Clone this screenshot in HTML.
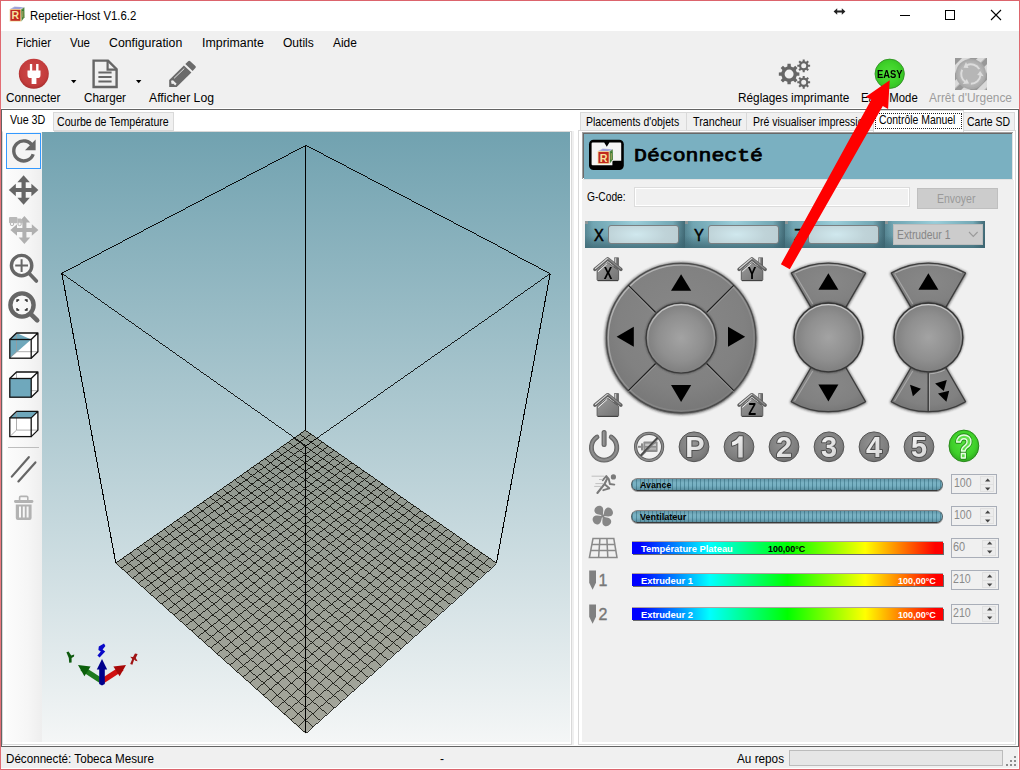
<!DOCTYPE html>
<html><head><meta charset="utf-8"><title>Repetier-Host V1.6.2</title>
<style>
html,body{margin:0;padding:0;background:#f0f0f0;overflow:hidden;}
#w{position:relative;width:1020px;height:770px;overflow:hidden;background:#f0f0f0;font-family:"Liberation Sans",sans-serif;}
#w div,#w svg,#w span{position:absolute;}
.t{overflow:visible;}
</style></head><body><div id="w">
<div style="left:0px;top:0px;width:1020px;height:31px;background:#fff;"></div>
<div style="left:1px;top:108px;width:1018px;height:1px;background:#fff;"></div>
<div style="left:1px;top:109px;width:1018px;height:638px;background:#fff;box-sizing:border-box;border:1px solid #646464;"></div>
<div style="left:1px;top:768px;width:1018px;height:1px;background:#fff;"></div>
<div style="left:1018px;top:747px;width:1px;height:22px;background:#fff;"></div>
<div style="left:0px;top:0px;width:1020px;height:1px;background:#dc646c;"></div>
<div style="left:0px;top:769px;width:1020px;height:1px;background:#dc646c;"></div>
<div style="left:0px;top:0px;width:1px;height:770px;background:linear-gradient(#dc646c 0,#e56f76 100px,#ee7a80 300px,#ee7a80 600px,#e06a72 770px);"></div>
<div style="left:1019px;top:0px;width:1px;height:770px;background:linear-gradient(#dc646c 0,#e56f76 100px,#ee7a80 300px,#ee7a80 600px,#e06a72 770px);"></div>
<svg style="left:9px;top:6px" width="16" height="16" viewBox="0 0 16 16"><polygon points="1,3 5.5,0.6 15.4,1.2 12,3.4" fill="#b9bce0"/><polygon points="3,2.4 6,1.2 13,1.6 10.5,2.8" fill="#8f94d6"/><polygon points="12,3.4 15.4,1.2 15.6,11.2 12.4,15.4" fill="#5a8a4a"/><polygon points="12.9,4.6 14.8,3.2 14.9,10.6 13.1,13.4" fill="#2f7a2a"/><rect x="13.4" y="5" width="0.9" height="6.4" fill="#c9b070"/><rect x="0.6" y="3" width="11.6" height="12.6" fill="#f3dfa2"/><rect x="1.4" y="3.8" width="10" height="11" fill="#c0281f"/><text x="6.4" y="13.3" font-family="Liberation Sans, sans-serif" font-weight="700" font-size="10.5" text-anchor="middle" fill="#f7e3a0">R</text></svg>
<svg class="t" style="left:30.40px;top:20.00px" width="1" height="1" overflow="visible"><text x="0" y="0" font-family="'Liberation Sans', sans-serif" font-size="12" font-weight="400" fill="#000" textLength="106.30" lengthAdjust="spacingAndGlyphs" >Repetier-Host V1.6.2</text></svg>
<svg style="left:833px;top:6.5px" width="13" height="9" viewBox="0 0 13 9"><path d="M0.6 4.5 L4.2 1.2 V3.6 H8.8 V1.2 L12.4 4.5 L8.8 7.8 V5.4 H4.2 V7.8 Z" fill="#222"/></svg>
<div style="left:900px;top:15px;width:10px;height:1px;background:#000;"></div>
<div style="left:945px;top:10px;width:10px;height:10px;background:transparent;box-sizing:border-box;border:1px solid #000;"></div>
<svg style="left:990px;top:9px" width="12" height="12" viewBox="0 0 12 12"><path d="M1 1 L11 11 M11 1 L1 11" stroke="#000" stroke-width="1.1" fill="none"/></svg>
<svg class="t" style="left:16.30px;top:47.00px" width="1" height="1" overflow="visible"><text x="0" y="0" font-family="'Liberation Sans', sans-serif" font-size="12" font-weight="400" fill="#000" textLength="35.10" lengthAdjust="spacingAndGlyphs" >Fichier</text></svg>
<svg class="t" style="left:70.20px;top:47.00px" width="1" height="1" overflow="visible"><text x="0" y="0" font-family="'Liberation Sans', sans-serif" font-size="12" font-weight="400" fill="#000" textLength="20.00" lengthAdjust="spacingAndGlyphs" >Vue</text></svg>
<svg class="t" style="left:109.40px;top:47.00px" width="1" height="1" overflow="visible"><text x="0" y="0" font-family="'Liberation Sans', sans-serif" font-size="12" font-weight="400" fill="#000" textLength="73.30" lengthAdjust="spacingAndGlyphs" >Configuration</text></svg>
<svg class="t" style="left:202.20px;top:47.00px" width="1" height="1" overflow="visible"><text x="0" y="0" font-family="'Liberation Sans', sans-serif" font-size="12" font-weight="400" fill="#000" textLength="61.90" lengthAdjust="spacingAndGlyphs" >Imprimante</text></svg>
<svg class="t" style="left:283.10px;top:47.00px" width="1" height="1" overflow="visible"><text x="0" y="0" font-family="'Liberation Sans', sans-serif" font-size="12" font-weight="400" fill="#000" textLength="30.80" lengthAdjust="spacingAndGlyphs" >Outils</text></svg>
<svg class="t" style="left:333.10px;top:47.00px" width="1" height="1" overflow="visible"><text x="0" y="0" font-family="'Liberation Sans', sans-serif" font-size="12" font-weight="400" fill="#000" textLength="23.90" lengthAdjust="spacingAndGlyphs" >Aide</text></svg>
<svg class="t" style="left:6.20px;top:102.00px" width="1" height="1" overflow="visible"><text x="0" y="0" font-family="'Liberation Sans', sans-serif" font-size="12" font-weight="400" fill="#000" textLength="54.40" lengthAdjust="spacingAndGlyphs" >Connecter</text></svg>
<svg class="t" style="left:84.00px;top:102.00px" width="1" height="1" overflow="visible"><text x="0" y="0" font-family="'Liberation Sans', sans-serif" font-size="12" font-weight="400" fill="#000" textLength="42.00" lengthAdjust="spacingAndGlyphs" >Charger</text></svg>
<svg class="t" style="left:149.00px;top:102.00px" width="1" height="1" overflow="visible"><text x="0" y="0" font-family="'Liberation Sans', sans-serif" font-size="12" font-weight="400" fill="#000" textLength="65.00" lengthAdjust="spacingAndGlyphs" >Afficher Log</text></svg>
<svg class="t" style="left:738.00px;top:102.00px" width="1" height="1" overflow="visible"><text x="0" y="0" font-family="'Liberation Sans', sans-serif" font-size="12" font-weight="400" fill="#000" textLength="111.40" lengthAdjust="spacingAndGlyphs" >Réglages imprimante</text></svg>
<svg class="t" style="left:861.30px;top:102.00px" width="1" height="1" overflow="visible"><text x="0" y="0" font-family="'Liberation Sans', sans-serif" font-size="12" font-weight="400" fill="#000" textLength="56.70" lengthAdjust="spacingAndGlyphs" >Easy Mode</text></svg>
<svg class="t" style="left:929.00px;top:102.00px" width="1" height="1" overflow="visible"><text x="0" y="0" font-family="'Liberation Sans', sans-serif" font-size="12" font-weight="400" fill="#9d9d9d" textLength="83.00" lengthAdjust="spacingAndGlyphs" >Arrêt d'Urgence</text></svg>
<svg style="left:18px;top:58px" width="32" height="32" viewBox="0 0 32 32"><defs><radialGradient id="gR" cx="50%" cy="45%" r="55%"><stop offset="0" stop-color="#cf4a4a"/><stop offset="0.8" stop-color="#c33c3c"/><stop offset="1" stop-color="#a82e2e"/></radialGradient></defs><circle cx="15.8" cy="15.8" r="15" fill="url(#gR)"/><path d="M11.9 6 h2.3 v6.5 h3.9 v-6.5 h2.4 v6.5 h2 v4.4 q0 3.2 -3.2 3.2 h-0.9 v5.9 h-4.8 v-5.9 h-0.9 q-3.2 0 -3.2 -3.2 v-4.4 h2.4z" fill="#fff"/></svg>
<svg style="left:71px;top:80px" width="6" height="4" viewBox="0 0 6 4"><path d="M0 0 H5.4 L2.7 3.2Z" fill="#000"/></svg>
<svg style="left:136px;top:80px" width="6" height="4" viewBox="0 0 6 4"><path d="M0 0 H5.4 L2.7 3.2Z" fill="#000"/></svg>
<svg style="left:92px;top:59px" width="27" height="30" viewBox="0 0 27 30"><path d="M1.6 1.6 H16 L24.6 10.2 V28 H1.6 Z" fill="none" stroke="#666" stroke-width="2.4" stroke-linejoin="miter"/><path d="M15.6 1.6 V10.6 H24.6" fill="none" stroke="#666" stroke-width="2.2"/><path d="M6.4 13.6 H19.6 M6.4 18 H19.6 M6.4 22.4 H19.6" stroke="#666" stroke-width="2"/></svg>
<svg style="left:165px;top:58px" width="34" height="32" viewBox="165 58 34 32"><path d="M169.2 80 L183.9 65.4 L191.4 72.4 L176.7 86.9 H169.2 Z" fill="#6b6b6b"/><path d="M185.3 64 L188.2 61.2 Q189.2 60.3 190.2 61.2 L195.4 66 Q196.4 67 195.4 68 L192.6 70.9 Z" fill="#6b6b6b"/><path d="M174.1 78.3 L184.3 68.5" stroke="#f0f0f0" stroke-width="0.9"/><path d="M171 80.8 L173 80.2 L176.6 83.8 L175.2 85.6 L173.4 83.7 L171.6 83.9 Z" fill="#f0f0f0"/></svg>
<svg style="left:776px;top:58px" width="38" height="34" viewBox="776 58 38 34"><path d="M796.80,72.33 L799.37,72.47 L799.37,75.73 L796.80,75.87 L795.80,78.29 L797.51,80.21 L795.21,82.51 L793.29,80.80 L790.87,81.80 L790.73,84.37 L787.47,84.37 L787.33,81.80 L784.91,80.80 L782.99,82.51 L780.69,80.21 L782.40,78.29 L781.40,75.87 L778.83,75.73 L778.83,72.47 L781.40,72.33 L782.40,69.91 L780.69,67.99 L782.99,65.69 L784.91,67.40 L787.33,66.40 L787.47,63.83 L790.73,63.83 L790.87,66.40 L793.29,67.40 L795.21,65.69 L797.51,67.99 L795.80,69.91Z M784.60 74.10 a4.50 4.50 0 1 0 9.00 0 a4.50 4.50 0 1 0 -9.00 0Z" fill="#666" fill-rule="evenodd"/><path d="M808.28,64.75 L810.12,64.78 L810.12,66.82 L808.28,66.85 L807.68,68.29 L808.96,69.62 L807.52,71.06 L806.19,69.78 L804.75,70.38 L804.72,72.22 L802.68,72.22 L802.65,70.38 L801.21,69.78 L799.88,71.06 L798.44,69.62 L799.72,68.29 L799.12,66.85 L797.28,66.82 L797.28,64.78 L799.12,64.75 L799.72,63.31 L798.44,61.98 L799.88,60.54 L801.21,61.82 L802.65,61.22 L802.68,59.38 L804.72,59.38 L804.75,61.22 L806.19,61.82 L807.52,60.54 L808.96,61.98 L807.68,63.31Z M801.20 65.80 a2.50 2.50 0 1 0 5.00 0 a2.50 2.50 0 1 0 -5.00 0Z" fill="#666" fill-rule="evenodd"/><path d="M808.28,81.25 L810.12,81.28 L810.12,83.32 L808.28,83.35 L807.68,84.79 L808.96,86.12 L807.52,87.56 L806.19,86.28 L804.75,86.88 L804.72,88.72 L802.68,88.72 L802.65,86.88 L801.21,86.28 L799.88,87.56 L798.44,86.12 L799.72,84.79 L799.12,83.35 L797.28,83.32 L797.28,81.28 L799.12,81.25 L799.72,79.81 L798.44,78.48 L799.88,77.04 L801.21,78.32 L802.65,77.72 L802.68,75.88 L804.72,75.88 L804.75,77.72 L806.19,78.32 L807.52,77.04 L808.96,78.48 L807.68,79.81Z M801.20 82.30 a2.50 2.50 0 1 0 5.00 0 a2.50 2.50 0 1 0 -5.00 0Z" fill="#666" fill-rule="evenodd"/></svg>
<svg style="left:873px;top:57px" width="34" height="34" viewBox="873 57 34 34"><defs><radialGradient id="gG" cx="48%" cy="48%" r="58%"><stop offset="0" stop-color="#52de3c"/><stop offset="0.55" stop-color="#40d32a"/><stop offset="0.9" stop-color="#36c224"/><stop offset="1" stop-color="#2c9c1e"/></radialGradient></defs><circle cx="889.7" cy="73.8" r="14.7" fill="url(#gG)" stroke="#2f8a22" stroke-width="0.8"/></svg>
<svg class="t" style="left:877.00px;top:77.90px" width="1" height="1" overflow="visible"><text x="0" y="0" font-family="'Liberation Sans', sans-serif" font-size="10" font-weight="700" fill="#000" textLength="25.50" lengthAdjust="spacingAndGlyphs" opacity=".999">EASY</text></svg>
<svg style="left:955px;top:58px" width="32" height="32" viewBox="0 0 32 32"><defs><pattern id="hz" width="11" height="11" patternUnits="userSpaceOnUse" patternTransform="rotate(45)"><rect width="11" height="11" fill="#989898"/><rect x="5" width="5.6" height="11" fill="#dadada"/></pattern></defs><rect width="32" height="32" fill="url(#hz)"/><circle cx="15.9" cy="16" r="15.1" fill="#a9a9a9"/><circle cx="15.9" cy="16" r="13.6" fill="#b0b0b0"/><circle cx="15.9" cy="16" r="11.8" fill="#b6b6b6"/><path d="M24.30 11.15 A9.7 9.7 0 0 0 11.65 7.28" fill="none" stroke="#dcdcdc" stroke-width="1.9"/><path d="M8.47 9.76 L11.03 3.95 L13.50 10.07 Z" fill="#dcdcdc"/><path d="M7.18 11.75 A9.7 9.7 0 0 0 10.34 23.95" fill="none" stroke="#dcdcdc" stroke-width="1.9"/><path d="M14.05 25.52 L7.72 26.10 L11.87 20.97 Z" fill="#dcdcdc"/><path d="M15.90 25.70 A9.7 9.7 0 0 0 25.55 17.01" fill="none" stroke="#dcdcdc" stroke-width="1.9"/><path d="M25.13 13.00 L28.70 18.26 L22.20 17.11 Z" fill="#dcdcdc"/></svg>
<div style="left:53px;top:112px;width:121px;height:19px;background:#f0f0f0;box-sizing:border-box;border:1px solid #d9d9d9;"></div>
<svg class="t" style="left:10.20px;top:124.00px" width="1" height="1" overflow="visible"><text x="0" y="0" font-family="'Liberation Sans', sans-serif" font-size="12.4" font-weight="400" fill="#000" textLength="35.30" lengthAdjust="spacingAndGlyphs" >Vue 3D</text></svg>
<svg class="t" style="left:57.30px;top:126.00px" width="1" height="1" overflow="visible"><text x="0" y="0" font-family="'Liberation Sans', sans-serif" font-size="12.4" font-weight="400" fill="#000" textLength="111.70" lengthAdjust="spacingAndGlyphs" >Courbe de Température</text></svg>
<div style="left:2px;top:131px;width:570px;height:614px;background:transparent;box-sizing:border-box;border:1px solid #d9d9d9;border-top-color:transparent;"></div>
<div style="left:54px;top:131px;width:518px;height:1px;background:#d9d9d9;"></div>
<div style="left:572px;top:131px;width:2px;height:614px;background:#f0f0f0;"></div>
<svg class="t" style="left:5.80px;top:763.00px" width="1" height="1" overflow="visible"><text x="0" y="0" font-family="'Liberation Sans', sans-serif" font-size="12" font-weight="400" fill="#000" textLength="147.90" lengthAdjust="spacingAndGlyphs" >Déconnecté: Tobeca Mesure</text></svg>
<svg class="t" style="left:439.50px;top:763.00px" width="1" height="1" overflow="visible"><text x="0" y="0" font-family="'Liberation Sans', sans-serif" font-size="12" font-weight="400" fill="#000" textLength="4.00" lengthAdjust="spacingAndGlyphs" >-</text></svg>
<svg class="t" style="left:737.00px;top:763.00px" width="1" height="1" overflow="visible"><text x="0" y="0" font-family="'Liberation Sans', sans-serif" font-size="12" font-weight="400" fill="#000" textLength="47.00" lengthAdjust="spacingAndGlyphs" >Au repos</text></svg>
<div style="left:789px;top:750px;width:214px;height:16px;background:#e6e6e6;box-sizing:border-box;border:1px solid #bcbcbc;"></div>
<div style="left:1014px;top:756px;width:2px;height:2px;background:#8c8c8c;"></div>
<div style="left:1010px;top:760px;width:2px;height:2px;background:#8c8c8c;"></div>
<div style="left:1014px;top:760px;width:2px;height:2px;background:#8c8c8c;"></div>
<div style="left:1006px;top:764px;width:2px;height:2px;background:#8c8c8c;"></div>
<div style="left:1010px;top:764px;width:2px;height:2px;background:#8c8c8c;"></div>
<div style="left:1014px;top:764px;width:2px;height:2px;background:#8c8c8c;"></div>
<div style="left:6px;top:132px;width:36px;height:610px;background:linear-gradient(90deg,#fcfcfc,#f6f6f6 60%,#eeeeee);"></div>
<div style="left:6px;top:133px;width:35px;height:36px;background:#f4f4f4;box-sizing:border-box;border:1px solid #3399ff;"></div>
<svg style="left:0;top:0" width="44" height="770" viewBox="0 0 44 770"><path d="M32.6 146.2 A10 10 0 1 0 33.2 154.2" fill="none" stroke="#666" stroke-width="3.4"/><path d="M35.6 139.6 V150.2 H25 Z" fill="#666"/><path d="M23.6 181.2 V198.8 M14.8 190 H32.4" stroke="#666" stroke-width="4.2"/><path d="M23.6 175.2 L29.8 182.2 L17.4 182.2 Z" fill="#666"/><path d="M23.6 204.8 L17.4 197.8 L29.8 197.8 Z" fill="#666"/><path d="M8.8 190 L15.8 183.8 L15.8 196.2 Z" fill="#666"/><path d="M38.4 190 L31.4 196.2 L31.4 183.8 Z" fill="#666"/><path d="M24.4 221.6 V238.4 M16 230 H32.8" stroke="#b0b0b0" stroke-width="4"/><path d="M24.4 216 L30.2 222.6 L18.6 222.6 Z" fill="#b0b0b0"/><path d="M24.4 244 L18.6 237.4 L30.2 237.4 Z" fill="#b0b0b0"/><path d="M10.4 230 L17 224.2 L17 235.8 Z" fill="#b0b0b0"/><path d="M38.4 230 L31.8 235.8 L31.8 224.2 Z" fill="#b0b0b0"/><rect x="9" y="217" width="8.4" height="6.2" rx="1" fill="#b9b9b9"/><path d="M17.4 218.6 h3.4 l2 2.4 v2.2 h-5.4z" fill="#b9b9b9"/><circle cx="12" cy="224" r="1.7" fill="#f4f4f4" stroke="#b9b9b9" stroke-width="1"/><circle cx="19.6" cy="224" r="1.7" fill="#f4f4f4" stroke="#b9b9b9" stroke-width="1"/><circle cx="21.6" cy="265.6" r="10.2" fill="none" stroke="#666" stroke-width="3.4"/><path d="M29 273.2 L36.4 281" stroke="#666" stroke-width="3.6" stroke-linecap="round"/><path d="M15.2 265.6 H28 M21.6 259.2 V272" stroke="#666" stroke-width="2"/><circle cx="22" cy="305" r="11.6" fill="none" stroke="#666" stroke-width="4.4"/><path d="M30.6 313.8 L37.2 320.4" stroke="#666" stroke-width="4.6" stroke-linecap="round"/><path d="M17 302 V300 H19.2 M24.8 300 H27 V302 M27 308 V310 H24.8 M19.2 310 H17 V308" fill="none" stroke="#222" stroke-width="1.3"/><path d="M9.8 339.5 H31.2 L37.9 333 V351.7 L31.2 358.2 H9.8 Z" fill="#fff"/><path d="M9.8 339.5 L16.5 333 H37.9 L31.2 339.5 Z" fill="#fff"/><path d="M9.8 339.5 H31.2 L9.8 358.2 Z" fill="#6fa8bc"/><path d="M9.8 339.5 L16.5 333 L31.2 339.5 Z" fill="#6fa8bc"/><path d="M16.5 333 V351.7 H37.9 M16.5 351.7 L9.8 358.2" fill="none" stroke="#9a9a9a" stroke-width="0.8"/><rect x="9.8" y="339.5" width="21.4" height="18.7" fill="none" stroke="#111" stroke-width="1.3"/><path d="M9.8 339.5 L16.5 333 H37.9 V351.7 L31.2 358.2 M31.2 339.5 L37.9 333" fill="none" stroke="#111" stroke-width="1.3" stroke-linejoin="round"/><path d="M9.8 378.5 H31.2 L37.9 372 V390.7 L31.2 397.2 H9.8 Z" fill="#fff"/><path d="M9.8 378.5 L16.5 372 H37.9 L31.2 378.5 Z" fill="#fff"/><rect x="9.8" y="378.5" width="21.4" height="18.7" fill="#6fa8bc"/><path d="M16.5 372 V390.7 H37.9 M16.5 390.7 L9.8 397.2" fill="none" stroke="#9a9a9a" stroke-width="0.8"/><rect x="9.8" y="378.5" width="21.4" height="18.7" fill="#6fa8bc"/><rect x="9.8" y="378.5" width="21.4" height="18.7" fill="none" stroke="#111" stroke-width="1.3"/><path d="M9.8 378.5 L16.5 372 H37.9 V390.7 L31.2 397.2 M31.2 378.5 L37.9 372" fill="none" stroke="#111" stroke-width="1.3" stroke-linejoin="round"/><path d="M9.8 417.9 H31.2 L37.9 411.4 V430.1 L31.2 436.6 H9.8 Z" fill="#fff"/><path d="M9.8 417.9 L16.5 411.4 H37.9 L31.2 417.9 Z" fill="#fff"/><path d="M9.8 417.9 L16.5 411.4 H37.9 L31.2 417.9 Z" fill="#6fa8bc"/><path d="M16.5 411.4 V430.1 H37.9 M16.5 430.1 L9.8 436.6" fill="none" stroke="#9a9a9a" stroke-width="0.8"/><rect x="9.8" y="417.9" width="21.4" height="18.7" fill="none" stroke="#111" stroke-width="1.3"/><path d="M9.8 417.9 L16.5 411.4 H37.9 V430.1 L31.2 436.6 M31.2 417.9 L37.9 411.4" fill="none" stroke="#111" stroke-width="1.3" stroke-linejoin="round"/><rect x="8" y="447" width="31" height="1" fill="#bdbdbd"/><path d="M11.8 476.6 L28.8 457.2 M18.4 481.4 L35.4 462.4" stroke="#666" stroke-width="2.2" stroke-linecap="round"/><rect x="14" y="500" width="19.4" height="3" rx="1.4" fill="#b2b2b2"/><path d="M19.6 500 V497.6 Q19.6 496.4 20.8 496.4 H26.6 Q27.8 496.4 27.8 497.6 V500" fill="none" stroke="#b2b2b2" stroke-width="1.6"/><path d="M15.8 504.4 H31.6 V518 Q31.6 520 29.6 520 H17.8 Q15.8 520 15.8 518 Z M19 506.4 V517.4 H21 V506.4Z M22.8 506.4 V517.4 H24.8 V506.4Z M26.6 506.4 V517.4 H28.6 V506.4Z" fill="#b2b2b2" fill-rule="evenodd"/></svg>
<div style="left:42px;top:132px;width:528px;height:610px;background:linear-gradient(#71a2b0,#f4f6f6);"></div>
<svg style="left:42px;top:132px" width="528" height="610" viewBox="42 132 528 610" shape-rendering="crispEdges"><polygon shape-rendering="geometricPrecision" points="305.3,429.8 496.9,563.1 305.5,733.4 115.3,563.1" fill="rgba(125,125,108,0.66)"/><path d="M305.30 430.30 L115.80 563.10" stroke="#0a0a05" stroke-width="0.859" fill="none"/><path d="M305.30 430.30 L496.40 563.10" stroke="#0a0a05" stroke-width="0.861" fill="none"/><path d="M310.98 434.24 L121.35 568.07" stroke="#0a0a05" stroke-width="0.857" fill="none"/><path d="M299.63 434.27 L490.77 568.11" stroke="#0a0a05" stroke-width="0.859" fill="none"/><path d="M316.69 438.22 L126.95 573.08" stroke="#0a0a05" stroke-width="0.855" fill="none"/><path d="M293.92 438.27 L485.10 573.15" stroke="#0a0a05" stroke-width="0.857" fill="none"/><path d="M322.46 442.22 L132.60 578.14" stroke="#0a0a05" stroke-width="0.853" fill="none"/><path d="M288.17 442.30 L479.38 578.24" stroke="#0a0a05" stroke-width="0.855" fill="none"/><path d="M328.26 446.26 L138.29 583.23" stroke="#0a0a05" stroke-width="0.851" fill="none"/><path d="M282.38 446.36 L473.61 583.37" stroke="#0a0a05" stroke-width="0.853" fill="none"/><path d="M334.11 450.32 L144.04 588.38" stroke="#0a0a05" stroke-width="0.849" fill="none"/><path d="M276.55 450.45 L467.80 588.54" stroke="#0a0a05" stroke-width="0.851" fill="none"/><path d="M340.01 454.42 L149.83 593.56" stroke="#0a0a05" stroke-width="0.847" fill="none"/><path d="M270.67 454.57 L461.94 593.75" stroke="#0a0a05" stroke-width="0.849" fill="none"/><path d="M345.95 458.55 L155.67 598.79" stroke="#0a0a05" stroke-width="0.845" fill="none"/><path d="M264.75 458.71 L456.04 599.00" stroke="#0a0a05" stroke-width="0.846" fill="none"/><path d="M351.93 462.71 L161.57 604.07" stroke="#0a0a05" stroke-width="0.843" fill="none"/><path d="M258.79 462.89 L450.08 604.30" stroke="#0a0a05" stroke-width="0.844" fill="none"/><path d="M357.97 466.90 L167.51 609.39" stroke="#0a0a05" stroke-width="0.841" fill="none"/><path d="M252.79 467.10 L444.08 609.64" stroke="#0a0a05" stroke-width="0.842" fill="none"/><path d="M364.05 471.12 L173.51 614.76" stroke="#0a0a05" stroke-width="0.839" fill="none"/><path d="M246.74 471.34 L438.02 615.03" stroke="#0a0a05" stroke-width="0.840" fill="none"/><path d="M370.17 475.38 L179.56 620.17" stroke="#0a0a05" stroke-width="0.836" fill="none"/><path d="M240.65 475.60 L431.92 620.45" stroke="#0a0a05" stroke-width="0.837" fill="none"/><path d="M376.35 479.67 L185.66 625.63" stroke="#0a0a05" stroke-width="0.834" fill="none"/><path d="M234.52 479.91 L425.76 625.93" stroke="#0a0a05" stroke-width="0.835" fill="none"/><path d="M382.57 484.00 L191.82 631.14" stroke="#0a0a05" stroke-width="0.832" fill="none"/><path d="M228.33 484.24 L419.56 631.45" stroke="#0a0a05" stroke-width="0.832" fill="none"/><path d="M388.84 488.36 L198.03 636.70" stroke="#0a0a05" stroke-width="0.829" fill="none"/><path d="M222.11 488.60 L413.30 637.02" stroke="#0a0a05" stroke-width="0.830" fill="none"/><path d="M395.17 492.75 L204.30 642.31" stroke="#0a0a05" stroke-width="0.827" fill="none"/><path d="M215.83 493.00 L406.99 642.63" stroke="#0a0a05" stroke-width="0.827" fill="none"/><path d="M401.54 497.18 L210.62 647.97" stroke="#0a0a05" stroke-width="0.825" fill="none"/><path d="M209.51 497.43 L400.62 648.29" stroke="#0a0a05" stroke-width="0.825" fill="none"/><path d="M407.96 501.64 L217.00 653.68" stroke="#0a0a05" stroke-width="0.822" fill="none"/><path d="M203.14 501.89 L394.20 654.00" stroke="#0a0a05" stroke-width="0.822" fill="none"/><path d="M414.44 506.14 L223.44 659.45" stroke="#0a0a05" stroke-width="0.820" fill="none"/><path d="M196.73 506.39 L387.73 659.76" stroke="#0a0a05" stroke-width="0.820" fill="none"/><path d="M420.97 510.68 L229.93 665.26" stroke="#0a0a05" stroke-width="0.817" fill="none"/><path d="M190.26 510.92 L381.20 665.57" stroke="#0a0a05" stroke-width="0.817" fill="none"/><path d="M427.55 515.25 L236.49 671.13" stroke="#0a0a05" stroke-width="0.815" fill="none"/><path d="M183.75 515.48 L374.62 671.42" stroke="#0a0a05" stroke-width="0.814" fill="none"/><path d="M434.18 519.86 L243.11 677.05" stroke="#0a0a05" stroke-width="0.812" fill="none"/><path d="M177.19 520.08 L367.97 677.33" stroke="#0a0a05" stroke-width="0.812" fill="none"/><path d="M440.87 524.51 L249.78 683.03" stroke="#0a0a05" stroke-width="0.810" fill="none"/><path d="M170.58 524.71 L361.27 683.29" stroke="#0a0a05" stroke-width="0.809" fill="none"/><path d="M447.61 529.19 L256.52 689.06" stroke="#0a0a05" stroke-width="0.807" fill="none"/><path d="M163.91 529.38 L354.51 689.30" stroke="#0a0a05" stroke-width="0.806" fill="none"/><path d="M454.41 533.92 L263.32 695.15" stroke="#0a0a05" stroke-width="0.804" fill="none"/><path d="M157.20 534.09 L347.70 695.37" stroke="#0a0a05" stroke-width="0.803" fill="none"/><path d="M461.26 538.68 L270.19 701.29" stroke="#0a0a05" stroke-width="0.802" fill="none"/><path d="M150.43 538.83 L340.82 701.49" stroke="#0a0a05" stroke-width="0.800" fill="none"/><path d="M468.17 543.48 L277.12 707.50" stroke="#0a0a05" stroke-width="0.799" fill="none"/><path d="M143.61 543.61 L333.88 707.66" stroke="#0a0a05" stroke-width="0.797" fill="none"/><path d="M475.14 548.33 L284.11 713.76" stroke="#0a0a05" stroke-width="0.796" fill="none"/><path d="M136.74 548.43 L326.88 713.88" stroke="#0a0a05" stroke-width="0.794" fill="none"/><path d="M482.17 553.21 L291.17 720.08" stroke="#0a0a05" stroke-width="0.793" fill="none"/><path d="M129.81 553.28 L319.82 720.17" stroke="#0a0a05" stroke-width="0.791" fill="none"/><path d="M489.25 558.13 L298.30 726.46" stroke="#0a0a05" stroke-width="0.790" fill="none"/><path d="M122.83 558.17 L312.69 726.50" stroke="#0a0a05" stroke-width="0.788" fill="none"/><path d="M496.40 563.10 L305.50 732.90" stroke="#0a0a05" stroke-width="0.787" fill="none"/><path d="M115.80 563.10 L305.50 732.90" stroke="#0a0a05" stroke-width="0.785" fill="none"/><path d="M305.50 145.60 L61.80 273.30" stroke="#000" stroke-width="0.926" fill="none"/><path d="M305.50 145.60 L550.20 273.60" stroke="#000" stroke-width="0.926" fill="none"/><path d="M61.80 273.30 L305.50 445.50" stroke="#000" stroke-width="0.857" fill="none"/><path d="M550.20 273.60 L305.50 445.50" stroke="#000" stroke-width="0.858" fill="none"/><path d="M305.50 145.60 L305.50 430.30" stroke="#000" stroke-width="1.040" fill="none"/><path d="M61.80 273.30 L115.80 563.10" stroke="#000" stroke-width="1.023" fill="none"/><path d="M550.20 273.60 L496.40 563.10" stroke="#000" stroke-width="1.023" fill="none"/><path d="M305.50 445.50 L305.50 732.90" stroke="#000" stroke-width="1.040" fill="none"/></svg>
<svg style="left:60px;top:640px" width="90" height="50" viewBox="60 640 90 50"><path d="M102 684.6 L80.5 670.5 L83.6 666.2 L105 680Z" fill="#1e7a1e"/><path d="M78 665 L90.6 666.4 L84.4 676.2Z" fill="#0b5f0b"/><path d="M102 684.6 L123.5 670.5 L120.4 666.2 L99 680Z" fill="#d01010"/><path d="M126 665 L113.4 666.4 L119.6 676.2Z" fill="#a80808"/><path d="M99.2 684 V669.5 H96.8 L102 659 L107.2 669.5 H104.8 V684 L102 685.4Z" fill="#00008b"/><path d="M98.8 646.4 L104 643.6 L105.4 646 L102.6 649.6 L105.2 651.4 L99.6 657.6 L97.4 655.4 L100.8 651.6 L98.4 650Z" fill="#0a0ac8"/><path d="M66.4 652.2 L68.6 651.4 L71.2 655.6 L74.2 654.6 L74 656.4 L71.6 658 L71.6 662.4 L69.2 662.8 L68.8 658Z" fill="#0f5a0f"/><path d="M135 653.4 L137.6 654 L135.8 658 L137.6 661.2 L135.4 660.8 L134.2 659.6 L132.4 664.8 L130.2 664 L132.2 659 L130.2 656.8 L133 657Z" fill="#a01414"/></svg>
<div style="left:578px;top:130px;width:438px;height:615px;background:#fff;box-sizing:border-box;border:1px solid #d9d9d9;"></div>
<div style="left:582px;top:132px;width:432px;height:610px;background:#f0f0f0;"></div>
<div style="left:580px;top:112px;width:107px;height:19px;background:#f0f0f0;box-sizing:border-box;border:1px solid #d9d9d9;"></div>
<div style="left:686px;top:112px;width:61.4px;height:19px;background:#f0f0f0;box-sizing:border-box;border:1px solid #d9d9d9;"></div>
<div style="left:746.4px;top:112px;width:128.6px;height:19px;background:#f0f0f0;box-sizing:border-box;border:1px solid #d9d9d9;"></div>
<div style="left:963px;top:112px;width:52px;height:19px;background:#f0f0f0;box-sizing:border-box;border:1px solid #d9d9d9;"></div>
<svg class="t" style="left:586.40px;top:126.00px" width="1" height="1" overflow="visible"><text x="0" y="0" font-family="'Liberation Sans', sans-serif" font-size="12.4" font-weight="400" fill="#000" textLength="93.10" lengthAdjust="spacingAndGlyphs" >Placements d'objets</text></svg>
<svg class="t" style="left:692.50px;top:126.00px" width="1" height="1" overflow="visible"><text x="0" y="0" font-family="'Liberation Sans', sans-serif" font-size="12.4" font-weight="400" fill="#000" textLength="48.50" lengthAdjust="spacingAndGlyphs" >Trancheur</text></svg>
<svg class="t" style="left:753.30px;top:126.00px" width="1" height="1" overflow="visible"><text x="0" y="0" font-family="'Liberation Sans', sans-serif" font-size="12.4" font-weight="400" fill="#000" textLength="116.30" lengthAdjust="spacingAndGlyphs" >Pré visualiser impression</text></svg>
<svg class="t" style="left:967.30px;top:126.00px" width="1" height="1" overflow="visible"><text x="0" y="0" font-family="'Liberation Sans', sans-serif" font-size="12.4" font-weight="400" fill="#000" textLength="43.10" lengthAdjust="spacingAndGlyphs" >Carte SD</text></svg>
<div style="left:873px;top:110px;width:91px;height:22px;background:#fff;box-sizing:border-box;border:1px solid #d9d9d9;border-bottom:none;"></div>
<div style="left:874.5px;top:113px;width:87px;height:16px;background:transparent;box-sizing:border-box;border:1px dotted #222;"></div>
<svg class="t" style="left:878.60px;top:124.00px" width="1" height="1" overflow="visible"><text x="0" y="0" font-family="'Liberation Sans', sans-serif" font-size="12.4" font-weight="400" fill="#000" textLength="76.40" lengthAdjust="spacingAndGlyphs" >Contrôle Manuel</text></svg>
<div style="left:582px;top:132px;width:432px;height:48px;background:#fff;"></div>
<div style="left:582px;top:132px;width:431px;height:1px;background:#a0a0a0;"></div>
<div style="left:582px;top:132px;width:1px;height:47px;background:#a0a0a0;"></div>
<div style="left:583px;top:133px;width:429px;height:1px;background:#696969;"></div>
<div style="left:583px;top:133px;width:1px;height:45px;background:#696969;"></div>
<div style="left:584px;top:134px;width:428px;height:45px;background:#7ab0c1;"></div>
<div style="left:583px;top:179px;width:430px;height:1px;background:#e3e3e3;"></div>
<div style="left:1012px;top:133px;width:1px;height:47px;background:#e3e3e3;"></div>
<svg style="left:588px;top:139px" width="37" height="32" viewBox="588 139 37 32"><rect x="589" y="139.8" width="34.8" height="30.2" rx="4.5" fill="#000"/><path d="M592.6 142.6 H604.2 L606.8 146.8 L609.4 142.6 H620.2 Q621.2 142.6 621.2 143.6 V160.8 H613.6 Q612.4 160.8 612.4 162 V165.2 H592.6 Q591.6 165.2 591.6 164.2 V143.6 Q591.6 142.6 592.6 142.6Z" fill="#f4f4f4"/></svg>
<svg style="left:597px;top:147.6px" width="16.4" height="16.4" viewBox="0 0 16 16"><polygon points="1,3 5.5,0.6 15.4,1.2 12,3.4" fill="#b9bce0"/><polygon points="3,2.4 6,1.2 13,1.6 10.5,2.8" fill="#8f94d6"/><polygon points="12,3.4 15.4,1.2 15.6,11.2 12.4,15.4" fill="#5a8a4a"/><polygon points="12.9,4.6 14.8,3.2 14.9,10.6 13.1,13.4" fill="#2f7a2a"/><rect x="13.4" y="5" width="0.9" height="6.4" fill="#c9b070"/><rect x="0.6" y="3" width="11.6" height="12.6" fill="#f3dfa2"/><rect x="1.4" y="3.8" width="10" height="11" fill="#c0281f"/><text x="6.4" y="13.3" font-family="Liberation Sans, sans-serif" font-weight="700" font-size="10.5" text-anchor="middle" fill="#f7e3a0">R</text></svg>
<svg class="t" style="left:634.00px;top:161.00px" width="1" height="1" overflow="visible"><text x="0" y="0" font-family="'Liberation Mono', monospace" font-size="18.2" font-weight="400" fill="#000" textLength="129.00" lengthAdjust="spacingAndGlyphs" stroke="#000" stroke-width="0.75">Déconnecté</text></svg>
<svg class="t" style="left:586.70px;top:201.00px" width="1" height="1" overflow="visible"><text x="0" y="0" font-family="'Liberation Sans', sans-serif" font-size="12.4" font-weight="400" fill="#000" textLength="38.60" lengthAdjust="spacingAndGlyphs" >G-Code:</text></svg>
<div style="left:634px;top:187px;width:276px;height:20px;background:#f0f0f0;box-sizing:border-box;border:1px solid #dcdcdc;box-shadow:inset 0 0 0 1px #fff;"></div>
<div style="left:917px;top:188px;width:81px;height:21px;background:#cccccc;box-sizing:border-box;border:1px solid #bfbfbf;"></div>
<svg class="t" style="left:937.40px;top:203.00px" width="1" height="1" overflow="visible"><text x="0" y="0" font-family="'Liberation Sans', sans-serif" font-size="12.4" font-weight="400" fill="#9a9a9a" textLength="38.40" lengthAdjust="spacingAndGlyphs" >Envoyer</text></svg>
<div style="left:585px;top:221px;width:100px;height:27px;background:radial-gradient(ellipse 70% 120% at 50% 0%,#9ccfdb 0,#79aebb 45%,#5f909d 100%);"></div>
<div style="left:585px;top:221px;width:100px;height:27px;background:linear-gradient(#ffffff00 55%,#3b6571aa 100%),linear-gradient(90deg,#3b657166 0,#3b657100 8%,#3b657100 88%,#2d505baa 100%);"></div>
<div style="left:585px;top:221px;width:3px;height:3px;background:#8f9799;"></div>
<div style="left:608px;top:225px;width:71px;height:19px;background:radial-gradient(ellipse 60% 90% at 40% 50%,#d0e8ee,#bfd3d8 70%,#bccfd4);box-sizing:border-box;border:1px solid #7a7f81;border-radius:3px;"></div>
<svg class="t" style="left:593.80px;top:240.60px" width="1" height="1" overflow="visible"><text x="0" y="0" font-family="'Liberation Sans', sans-serif" font-size="16" font-weight="400" fill="#000" textLength="9.80" lengthAdjust="spacingAndGlyphs" stroke="#000" stroke-width="0.5">X</text></svg>
<div style="left:685px;top:221px;width:100px;height:27px;background:radial-gradient(ellipse 70% 120% at 50% 0%,#9ccfdb 0,#79aebb 45%,#5f909d 100%);"></div>
<div style="left:685px;top:221px;width:100px;height:27px;background:linear-gradient(#ffffff00 55%,#3b6571aa 100%),linear-gradient(90deg,#3b657166 0,#3b657100 8%,#3b657100 88%,#2d505baa 100%);"></div>
<div style="left:685px;top:221px;width:3px;height:3px;background:#8f9799;"></div>
<div style="left:708px;top:225px;width:71px;height:19px;background:radial-gradient(ellipse 60% 90% at 40% 50%,#d0e8ee,#bfd3d8 70%,#bccfd4);box-sizing:border-box;border:1px solid #7a7f81;border-radius:3px;"></div>
<svg class="t" style="left:693.80px;top:240.60px" width="1" height="1" overflow="visible"><text x="0" y="0" font-family="'Liberation Sans', sans-serif" font-size="16" font-weight="400" fill="#000" textLength="9.80" lengthAdjust="spacingAndGlyphs" stroke="#000" stroke-width="0.5">Y</text></svg>
<div style="left:785px;top:221px;width:100px;height:27px;background:radial-gradient(ellipse 70% 120% at 50% 0%,#9ccfdb 0,#79aebb 45%,#5f909d 100%);"></div>
<div style="left:785px;top:221px;width:100px;height:27px;background:linear-gradient(#ffffff00 55%,#3b6571aa 100%),linear-gradient(90deg,#3b657166 0,#3b657100 8%,#3b657100 88%,#2d505baa 100%);"></div>
<div style="left:785px;top:221px;width:3px;height:3px;background:#8f9799;"></div>
<div style="left:808px;top:225px;width:71px;height:19px;background:radial-gradient(ellipse 60% 90% at 40% 50%,#d0e8ee,#bfd3d8 70%,#bccfd4);box-sizing:border-box;border:1px solid #7a7f81;border-radius:3px;"></div>
<svg class="t" style="left:793.80px;top:240.60px" width="1" height="1" overflow="visible"><text x="0" y="0" font-family="'Liberation Sans', sans-serif" font-size="16" font-weight="400" fill="#000" textLength="9.80" lengthAdjust="spacingAndGlyphs" stroke="#000" stroke-width="0.5">Z</text></svg>
<div style="left:885px;top:221px;width:100px;height:27px;background:radial-gradient(ellipse 70% 120% at 50% 0%,#9ccfdb 0,#79aebb 45%,#5f909d 100%);"></div>
<div style="left:885px;top:221px;width:100px;height:27px;background:linear-gradient(#ffffff00 55%,#3b6571aa 100%),linear-gradient(90deg,#3b657166 0,#3b657100 8%,#3b657100 88%,#2d505baa 100%);"></div>
<div style="left:885px;top:221px;width:3px;height:3px;background:#8f9799;"></div>
<div style="left:893px;top:224px;width:90px;height:21px;background:#cccccc;box-sizing:border-box;border:1px solid #bdbdbd;"></div>
<svg class="t" style="left:897.20px;top:238.60px" width="1" height="1" overflow="visible"><text x="0" y="0" font-family="'Liberation Sans', sans-serif" font-size="12.4" font-weight="400" fill="#868686" textLength="53.40" lengthAdjust="spacingAndGlyphs" >Extrudeur 1</text></svg>
<svg style="left:968px;top:231px" width="11" height="7" viewBox="0 0 11 7"><path d="M1 1 L5.3 5.4 L9.6 1" fill="none" stroke="#9a9a9a" stroke-width="1.1"/></svg>
<svg style="left:582px;top:250px" width="432" height="390" viewBox="582 250 432 390"><defs>
<radialGradient id="gDisc" cx="50%" cy="42%" r="60%"><stop offset="0" stop-color="#888888"/><stop offset="0.7" stop-color="#818181"/><stop offset="1" stop-color="#767676"/></radialGradient>
<radialGradient id="gBtn" cx="50%" cy="50%" r="55%"><stop offset="0" stop-color="#a3a3a3"/><stop offset="0.6" stop-color="#8f8f8f"/><stop offset="1" stop-color="#7a7a7a"/></radialGradient>
<linearGradient id="gRim" x1="0" y1="0" x2="1" y2="1"><stop offset="0" stop-color="#fff" stop-opacity=".55"/><stop offset=".5" stop-color="#fff" stop-opacity=".15"/><stop offset="1" stop-color="#fff" stop-opacity="0"/></linearGradient>
<linearGradient id="gRimV" x1="0" y1="0" x2="0" y2="1"><stop offset="0" stop-color="#fff" stop-opacity=".6"/><stop offset=".6" stop-color="#fff" stop-opacity=".1"/><stop offset="1" stop-color="#fff" stop-opacity="0"/></linearGradient>
<filter id="fSh" x="-20%" y="-20%" width="140%" height="140%"><feGaussianBlur stdDeviation="1.6"/></filter>
<filter id="fSh2" x="-20%" y="-20%" width="140%" height="140%"><feGaussianBlur stdDeviation="1.1"/></filter>
<linearGradient id="gHome" x1="0" y1="0" x2="1" y2="1"><stop offset="0" stop-color="#9a9a9a"/><stop offset="1" stop-color="#737373"/></linearGradient>
<radialGradient id="gNum" cx="46%" cy="38%" r="68%"><stop offset="0" stop-color="#949494"/><stop offset="0.7" stop-color="#7e7e7e"/><stop offset="1" stop-color="#6a6a6a"/></radialGradient>
<radialGradient id="gHelp" cx="50%" cy="42%" r="62%"><stop offset="0" stop-color="#54e03e"/><stop offset="0.65" stop-color="#3ed029"/><stop offset="1" stop-color="#2c9e1e"/></radialGradient>
<linearGradient id="gIcon" x1="0" y1="0" x2="0" y2="1"><stop offset="0" stop-color="#8a8a8a"/><stop offset="1" stop-color="#686868"/></linearGradient>
</defs><circle cx="681.1" cy="338.5" r="75.8" fill="#1c1c1c" opacity=".95" filter="url(#fSh)"/><circle cx="681.1" cy="338" r="74.6" fill="url(#gDisc)" stroke="#4c4c4c" stroke-width="1.1"/><circle cx="681.1" cy="338" r="72.8" fill="none" stroke="url(#gRim)" stroke-width="1.3"/><path d="M706.56 313.54 L733.78 286.32" stroke="#fff" stroke-opacity=".32" stroke-width="1.2"/><path d="M706.56 312.54 L733.78 285.32" stroke="#1e1e1e" stroke-width="1.2"/><path d="M706.56 364.46 L733.78 391.68" stroke="#fff" stroke-opacity=".32" stroke-width="1.2"/><path d="M706.56 363.46 L733.78 390.68" stroke="#1e1e1e" stroke-width="1.2"/><path d="M655.64 364.46 L628.42 391.68" stroke="#fff" stroke-opacity=".32" stroke-width="1.2"/><path d="M655.64 363.46 L628.42 390.68" stroke="#1e1e1e" stroke-width="1.2"/><path d="M655.64 313.54 L628.42 286.32" stroke="#fff" stroke-opacity=".32" stroke-width="1.2"/><path d="M655.64 312.54 L628.42 285.32" stroke="#1e1e1e" stroke-width="1.2"/><circle cx="681.1" cy="338" r="35.6" fill="#2e2e2e" opacity=".9" filter="url(#fSh2)"/><circle cx="681.1" cy="338" r="35" fill="url(#gBtn)" stroke="#3a3a3a" stroke-width="1.2"/><circle cx="681.1" cy="338" r="33.4" fill="none" stroke="url(#gRimV)" stroke-width="1.4"/><path d="M681.1 274.2 L691.2 290.8 H671 Z" fill="#000"/><path d="M681.1 402 L691.2 385 H671 Z" fill="#000"/><path d="M616.6 336.8 L633.8 326.8 V346.8 Z" fill="#000"/><path d="M745.2 336.8 L728 326.8 V346.8 Z" fill="#000"/><path d="M811.90 308.82 L791.25 273.05 A74.3 74.3 0 0 1 865.55 273.05 L844.90 308.82 A33 33 0 0 0 811.90 308.82 Z" fill="#1c1c1c" opacity=".9" stroke="#1c1c1c" stroke-width="1.4" filter="url(#fSh)" transform="translate(0,0.4)"/><path d="M811.90 308.82 L791.25 273.05 A74.3 74.3 0 0 1 865.55 273.05 L844.90 308.82 A33 33 0 0 0 811.90 308.82 Z" fill="url(#gDisc)" stroke="#3c3c3c" stroke-width="1.3" stroke-linejoin="round"/><path d="M844.90 365.98 L865.55 401.75 A74.3 74.3 0 0 1 791.25 401.75 L811.90 365.98 A33 33 0 0 0 844.90 365.98 Z" fill="#1c1c1c" opacity=".9" stroke="#1c1c1c" stroke-width="1.4" filter="url(#fSh)" transform="translate(0,0.4)"/><path d="M844.90 365.98 L865.55 401.75 A74.3 74.3 0 0 1 791.25 401.75 L811.90 365.98 A33 33 0 0 0 844.90 365.98 Z" fill="url(#gDisc)" stroke="#3c3c3c" stroke-width="1.3" stroke-linejoin="round"/><path d="M794.92 273.09 A72.5 72.5 0 0 1 861.88 273.09" fill="none" stroke="#fff" stroke-opacity=".38" stroke-width="1.1"/><path d="M812.76 303.87 L794.46 273.56" stroke="#fff" stroke-opacity=".3" stroke-width="1.1"/><path d="M812.76 370.93 L794.46 401.24" stroke="#fff" stroke-opacity=".3" stroke-width="1.1"/><circle cx="828.4" cy="337.4" r="35.2" fill="#2a2a2a" opacity=".9" filter="url(#fSh2)"/><circle cx="828.4" cy="337.4" r="34.4" fill="url(#gBtn)" stroke="#363636" stroke-width="1.3"/><circle cx="828.4" cy="337.4" r="32.8" fill="none" stroke="url(#gRimV)" stroke-width="1.4"/><path d="M828.4 273.2 L838.4 289.8 H818.4 Z" fill="#000"/><path d="M828.4 401.4 L838.4 384.4 H818.4 Z" fill="#000"/><path d="M911.90 308.82 L891.25 273.05 A74.3 74.3 0 0 1 965.55 273.05 L944.90 308.82 A33 33 0 0 0 911.90 308.82 Z" fill="#1c1c1c" opacity=".9" stroke="#1c1c1c" stroke-width="1.4" filter="url(#fSh)" transform="translate(0,0.4)"/><path d="M911.90 308.82 L891.25 273.05 A74.3 74.3 0 0 1 965.55 273.05 L944.90 308.82 A33 33 0 0 0 911.90 308.82 Z" fill="url(#gDisc)" stroke="#3c3c3c" stroke-width="1.3" stroke-linejoin="round"/><path d="M944.90 365.98 L965.55 401.75 A74.3 74.3 0 0 1 891.25 401.75 L911.90 365.98 A33 33 0 0 0 944.90 365.98 Z" fill="#1c1c1c" opacity=".9" stroke="#1c1c1c" stroke-width="1.4" filter="url(#fSh)" transform="translate(0,0.4)"/><path d="M944.90 365.98 L965.55 401.75 A74.3 74.3 0 0 1 891.25 401.75 L911.90 365.98 A33 33 0 0 0 944.90 365.98 Z" fill="url(#gDisc)" stroke="#3c3c3c" stroke-width="1.3" stroke-linejoin="round"/><path d="M894.92 273.09 A72.5 72.5 0 0 1 961.88 273.09" fill="none" stroke="#fff" stroke-opacity=".38" stroke-width="1.1"/><path d="M912.76 303.87 L894.46 273.56" stroke="#fff" stroke-opacity=".3" stroke-width="1.1"/><path d="M912.76 370.93 L894.46 401.24" stroke="#fff" stroke-opacity=".3" stroke-width="1.1"/><circle cx="928.4" cy="337.4" r="35.2" fill="#2a2a2a" opacity=".9" filter="url(#fSh2)"/><circle cx="928.4" cy="337.4" r="34.4" fill="url(#gBtn)" stroke="#363636" stroke-width="1.3"/><circle cx="928.4" cy="337.4" r="32.8" fill="none" stroke="url(#gRimV)" stroke-width="1.4"/><path d="M928.4 273.2 L938.4 289.8 H918.4 Z" fill="#000"/><path d="M928.2 372.4 V411.7" stroke="#3a3a3a" stroke-width="1.4"/><path d="M929.5 373.4 V410.7" stroke="#fff" stroke-opacity=".3" stroke-width="1"/><path d="M929.67 373.78 A36.4 36.4 0 0 0 944.93 369.83" fill="none" stroke="#fff" stroke-opacity=".4" stroke-width="1.1"/><path d="M910 384.8 L920.9 388.7 L912.9 396.2 Z" fill="#000"/><path d="M935.1 383.6 L946.8 380.1 L943.8 390.9 Z" fill="#000"/><path d="M938 393.5 L949.2 390.7 L946.4 401.7 Z" fill="#000"/><rect x="614" y="257.2" width="4.7" height="12" rx=".6" fill="#7b7b7b"/><rect x="614.8" y="258.2" width="1.3" height="8" fill="#c4c4c4"/><rect x="617.5" y="257.8" width="1.2" height="11" fill="#5e5e5e"/><path d="M607.7 262.4 L618.6 270.4 V279.6 Q618.6 280.6 617.6 280.6 H598.1 Q597.1 280.6 597.1 279.6 V270.4 Z" fill="url(#gHome)" stroke="#565656" stroke-width=".9"/><path d="M597.8 280.6 H618" stroke="#3e3e3e" stroke-width="1"/><path d="M594.9 269.3 L607.7 258.9 L620.9 269.3" fill="none" stroke="#606060" stroke-width="3.5" stroke-linecap="round" stroke-linejoin="round"/><path d="M608.3 258.7 L620.4 268.6" fill="none" stroke="#8a8a8a" stroke-width="1.3" stroke-linecap="round"/><path d="M595.4 268.7 L607.4 258.5" fill="none" stroke="#dadada" stroke-width="1.1" stroke-linecap="round"/><path d="M598.1 271.8 L607.1 263.6" fill="none" stroke="#fff" stroke-opacity=".85" stroke-width="1"/><text x="607.9" y="279" font-family="Liberation Sans, sans-serif" font-size="16" font-weight="700" text-anchor="middle" fill="#000" opacity=".999" transform="translate(607.9,0) scale(0.8,1) translate(-607.9,0)">X</text><rect x="758.2" y="257.2" width="4.7" height="12" rx=".6" fill="#7b7b7b"/><rect x="759" y="258.2" width="1.3" height="8" fill="#c4c4c4"/><rect x="761.7" y="257.8" width="1.2" height="11" fill="#5e5e5e"/><path d="M751.9 262.4 L762.8 270.4 V279.6 Q762.8 280.6 761.8 280.6 H742.3 Q741.3 280.6 741.3 279.6 V270.4 Z" fill="url(#gHome)" stroke="#565656" stroke-width=".9"/><path d="M742 280.6 H762.2" stroke="#3e3e3e" stroke-width="1"/><path d="M739.1 269.3 L751.9 258.9 L765.1 269.3" fill="none" stroke="#606060" stroke-width="3.5" stroke-linecap="round" stroke-linejoin="round"/><path d="M752.5 258.7 L764.6 268.6" fill="none" stroke="#8a8a8a" stroke-width="1.3" stroke-linecap="round"/><path d="M739.6 268.7 L751.6 258.5" fill="none" stroke="#dadada" stroke-width="1.1" stroke-linecap="round"/><path d="M742.3 271.8 L751.3 263.6" fill="none" stroke="#fff" stroke-opacity=".85" stroke-width="1"/><text x="752.1" y="279" font-family="Liberation Sans, sans-serif" font-size="16" font-weight="700" text-anchor="middle" fill="#000" opacity=".999" transform="translate(752.1,0) scale(0.8,1) translate(-752.1,0)">Y</text><rect x="614" y="393" width="4.7" height="12" rx=".6" fill="#7b7b7b"/><rect x="614.8" y="394" width="1.3" height="8" fill="#c4c4c4"/><rect x="617.5" y="393.6" width="1.2" height="11" fill="#5e5e5e"/><path d="M607.7 398.2 L618.6 406.2 V415.4 Q618.6 416.4 617.6 416.4 H598.1 Q597.1 416.4 597.1 415.4 V406.2 Z" fill="url(#gHome)" stroke="#565656" stroke-width=".9"/><path d="M597.8 416.4 H618" stroke="#3e3e3e" stroke-width="1"/><path d="M594.9 405.1 L607.7 394.7 L620.9 405.1" fill="none" stroke="#606060" stroke-width="3.5" stroke-linecap="round" stroke-linejoin="round"/><path d="M608.3 394.5 L620.4 404.4" fill="none" stroke="#8a8a8a" stroke-width="1.3" stroke-linecap="round"/><path d="M595.4 404.5 L607.4 394.3" fill="none" stroke="#dadada" stroke-width="1.1" stroke-linecap="round"/><path d="M598.1 407.6 L607.1 399.4" fill="none" stroke="#fff" stroke-opacity=".85" stroke-width="1"/><rect x="758.2" y="393" width="4.7" height="12" rx=".6" fill="#7b7b7b"/><rect x="759" y="394" width="1.3" height="8" fill="#c4c4c4"/><rect x="761.7" y="393.6" width="1.2" height="11" fill="#5e5e5e"/><path d="M751.9 398.2 L762.8 406.2 V415.4 Q762.8 416.4 761.8 416.4 H742.3 Q741.3 416.4 741.3 415.4 V406.2 Z" fill="url(#gHome)" stroke="#565656" stroke-width=".9"/><path d="M742 416.4 H762.2" stroke="#3e3e3e" stroke-width="1"/><path d="M739.1 405.1 L751.9 394.7 L765.1 405.1" fill="none" stroke="#606060" stroke-width="3.5" stroke-linecap="round" stroke-linejoin="round"/><path d="M752.5 394.5 L764.6 404.4" fill="none" stroke="#8a8a8a" stroke-width="1.3" stroke-linecap="round"/><path d="M739.6 404.5 L751.6 394.3" fill="none" stroke="#dadada" stroke-width="1.1" stroke-linecap="round"/><path d="M742.3 407.6 L751.3 399.4" fill="none" stroke="#fff" stroke-opacity=".85" stroke-width="1"/><text x="752.1" y="414.8" font-family="Liberation Sans, sans-serif" font-size="16" font-weight="700" text-anchor="middle" fill="#000" opacity=".999" transform="translate(752.1,0) scale(0.8,1) translate(-752.1,0)">Z</text><path d="M611.20 436.97 A12.7 12.7 0 1 1 597.00 436.97" fill="none" stroke="#5f5f5f" stroke-width="4.8" stroke-linecap="round"/><path d="M611.20 436.97 A12.7 12.7 0 1 1 597.00 436.97" fill="none" stroke="#7e7e7e" stroke-width="3.2" stroke-linecap="round"/><path d="M611.20 436.97 A12.7 12.7 0 1 1 597.00 436.97" fill="none" stroke="#939393" stroke-width="1.1" stroke-linecap="round"/><path d="M604.1 432.4 V444.6" stroke="#5f5f5f" stroke-width="5" stroke-linecap="round"/><path d="M604.1 432.4 V444.6" stroke="#808080" stroke-width="3.2" stroke-linecap="round"/><path d="M603.7 432.6 V444.4" stroke="#9a9a9a" stroke-width="1.1" stroke-linecap="round"/><circle cx="649.1" cy="446.8" r="13.5" fill="none" stroke="#5a5a5a" stroke-width="3.2"/><circle cx="649.1" cy="446.8" r="13.5" fill="none" stroke="#8c8c8c" stroke-width="1.5"/><rect x="643.4" y="441.6" width="14.2" height="10.4" rx="1" fill="#8e8e8e"/><rect x="645.2" y="443.6" width="10.8" height="2.4" fill="#c6c6c6"/><rect x="645.2" y="447.6" width="10.8" height="2.2" fill="#b4b4b4"/><path d="M638 446.8 H643.4" stroke="#8c8c8c" stroke-width="2"/><rect x="641" y="443.4" width="2" height="7" fill="#8c8c8c"/><path d="M640.8 455.8 L657.8 437.8" stroke="#4a4a4a" stroke-width="2.6"/><path d="M641.6 456.4 L658.4 438.6" stroke="#a0a0a0" stroke-width="0.8"/><linearGradient id="gInk" x1="0" y1="0" x2="1" y2="1"><stop offset="0" stop-color="#fbfbfb"/><stop offset="1" stop-color="#cfcfcf"/></linearGradient><linearGradient id="gInkG" x1="0" y1="0" x2="1" y2="1"><stop offset="0" stop-color="#e9ffe9"/><stop offset="1" stop-color="#8fe88f"/></linearGradient><circle cx="694" cy="446.8" r="14.9" fill="url(#gNum)" stroke="#555" stroke-width="1"/><text x="694.9" y="457.3" font-family="Liberation Sans, sans-serif" font-size="29" font-weight="700" text-anchor="middle" fill="url(#gInk)" stroke="#4e4e4e" stroke-width="2" stroke-linejoin="round" paint-order="stroke" opacity=".999">P</text><circle cx="739" cy="446.8" r="14.9" fill="url(#gNum)" stroke="#555" stroke-width="1"/><path d="M742.7 436.3 V457.5 H738.3 V442.9 Q735.7 444.9 732.1 445.7 V441.9 Q736.9 440.3 739.1 436.3 Z" fill="url(#gInk)" stroke="#4e4e4e" stroke-width="2" stroke-linejoin="round" paint-order="stroke"/><circle cx="784" cy="446.8" r="14.9" fill="url(#gNum)" stroke="#555" stroke-width="1"/><text x="784" y="457.3" font-family="Liberation Sans, sans-serif" font-size="29" font-weight="700" text-anchor="middle" fill="url(#gInk)" stroke="#4e4e4e" stroke-width="2" stroke-linejoin="round" paint-order="stroke" opacity=".999">2</text><circle cx="829" cy="446.8" r="14.9" fill="url(#gNum)" stroke="#555" stroke-width="1"/><text x="829" y="457.3" font-family="Liberation Sans, sans-serif" font-size="29" font-weight="700" text-anchor="middle" fill="url(#gInk)" stroke="#4e4e4e" stroke-width="2" stroke-linejoin="round" paint-order="stroke" opacity=".999">3</text><circle cx="874" cy="446.8" r="14.9" fill="url(#gNum)" stroke="#555" stroke-width="1"/><text x="874" y="457.3" font-family="Liberation Sans, sans-serif" font-size="29" font-weight="700" text-anchor="middle" fill="url(#gInk)" stroke="#4e4e4e" stroke-width="2" stroke-linejoin="round" paint-order="stroke" opacity=".999">4</text><circle cx="919" cy="446.8" r="14.9" fill="url(#gNum)" stroke="#555" stroke-width="1"/><text x="919" y="457.3" font-family="Liberation Sans, sans-serif" font-size="29" font-weight="700" text-anchor="middle" fill="url(#gInk)" stroke="#4e4e4e" stroke-width="2" stroke-linejoin="round" paint-order="stroke" opacity=".999">5</text><ellipse cx="963.9" cy="445.9" rx="14.9" ry="15.8" fill="url(#gHelp)" stroke="#2a8a1c" stroke-width="1"/><text x="0" y="0" font-family="Liberation Sans, sans-serif" font-size="33" font-weight="700" text-anchor="middle" transform="translate(963.9 457.7) scale(0.86 1)" fill="#1f7f14" stroke="#1f7f14" stroke-width="3.4" stroke-linejoin="round" opacity=".9">?</text><text x="0" y="0" font-family="Liberation Sans, sans-serif" font-size="33" font-weight="700" text-anchor="middle" transform="translate(963.9 457.7) scale(0.86 1)" fill="#62e04c" stroke="#e6ffe2" stroke-width="1.5" stroke-linejoin="round" opacity=".999">?</text><circle cx="613.4" cy="476.9" r="2.6" fill="#7a7a7a"/><path d="M597.4 493 L604.6 484 L607.2 478.6" fill="none" stroke="#7a7a7a" stroke-width="2.1" stroke-linecap="round"/><path d="M602.8 480.2 L606.3 476 L608.8 479.2 L609.9 484 L614.3 484.6" fill="none" stroke="#7a7a7a" stroke-width="1.9" stroke-linejoin="round" stroke-linecap="round"/><path d="M605.2 484.8 L609.3 488.3 L603.3 490.2" fill="none" stroke="#7a7a7a" stroke-width="1.9" stroke-linejoin="round" stroke-linecap="round"/><path d="M591.6 476.2 H604.4 M599 479.5 H603 M595.4 483.6 H603.2 M594.2 486.4 H601.4" stroke="#b4b4b4" stroke-width="0.8"/><path d="M0 0 C-0.6 -2.4 -5.8 -3.8 -5.4 -7.8 C-5 -11.6 0.6 -12.6 3 -10 C5.4 -7.2 2.6 -4.2 0 0Z" fill="#878787" transform="translate(602.8 516) rotate(-27.7) scale(0.97)"/><path d="M0 0 C-0.6 -2.4 -5.8 -3.8 -5.4 -7.8 C-5 -11.6 0.6 -12.6 3 -10 C5.4 -7.2 2.6 -4.2 0 0Z" fill="#878787" transform="translate(602.8 516) rotate(62.3) scale(0.97)"/><path d="M0 0 C-0.6 -2.4 -5.8 -3.8 -5.4 -7.8 C-5 -11.6 0.6 -12.6 3 -10 C5.4 -7.2 2.6 -4.2 0 0Z" fill="#878787" transform="translate(602.8 516) rotate(152.3) scale(0.97)"/><path d="M0 0 C-0.6 -2.4 -5.8 -3.8 -5.4 -7.8 C-5 -11.6 0.6 -12.6 3 -10 C5.4 -7.2 2.6 -4.2 0 0Z" fill="#878787" transform="translate(602.8 516) rotate(242.3) scale(0.97)"/><circle cx="602.8" cy="516" r="1.6" fill="#878787"/><path d="M593 538.6 H613.8 L617 557.6 H589.4 Z M589.4 557.6 H617 M592 544.6 H614.8 M590.8 550.6 H615.8 M599.9 538.6 L598.6 557.6 M606.9 538.6 L607.8 557.6" fill="none" stroke="#8a8a8a" stroke-width="1.5"/><path d="M589.2 570.4 H596 V582.8 L592.6 589.8 L589.2 582.8 Z" fill="#808080"/><text x="598.6" y="586" font-family="Liberation Sans, sans-serif" font-size="16" fill="#777" stroke="#777" stroke-width="0.35">1</text><path d="M589.2 604.4 H596 V616.8 L592.6 623.8 L589.2 616.8 Z" fill="#808080"/><text x="598.6" y="620" font-family="Liberation Sans, sans-serif" font-size="16" fill="#777" stroke="#777" stroke-width="0.35">2</text></svg>
<div style="left:631px;top:477.6px;width:312.4px;height:13.4px;background:repeating-linear-gradient(90deg,#4f899b 0,#4f899b 1px,#76b0c2 1px,#76b0c2 4px);box-sizing:border-box;border:1px solid #4d5b60;border-top-color:#8a8686;border-bottom-color:#3a3a3a;border-radius:7px;box-shadow:0 1px 0.5px #9a9a9a;"></div><div style="left:632px;top:478.6px;width:310.4px;height:11.4px;background:linear-gradient(#1e485840,#ffffff08 35%,#ffffff00 60%,#1e485850);border-radius:6px;"></div>
<svg class="t" style="left:640.20px;top:488.00px" width="1" height="1" overflow="visible"><text x="0" y="0" font-family="'Liberation Sans', sans-serif" font-size="9.6" font-weight="700" fill="#000" textLength="31.40" lengthAdjust="spacingAndGlyphs" >Avance</text></svg>
<div style="left:631px;top:509.6px;width:312.4px;height:13.4px;background:repeating-linear-gradient(90deg,#4f899b 0,#4f899b 1px,#76b0c2 1px,#76b0c2 4px);box-sizing:border-box;border:1px solid #4d5b60;border-top-color:#8a8686;border-bottom-color:#3a3a3a;border-radius:7px;box-shadow:0 1px 0.5px #9a9a9a;"></div><div style="left:632px;top:510.6px;width:310.4px;height:11.4px;background:linear-gradient(#1e485840,#ffffff08 35%,#ffffff00 60%,#1e485850);border-radius:6px;"></div>
<svg class="t" style="left:640.20px;top:520.00px" width="1" height="1" overflow="visible"><text x="0" y="0" font-family="'Liberation Sans', sans-serif" font-size="9.6" font-weight="700" fill="#000" textLength="46.40" lengthAdjust="spacingAndGlyphs" >Ventilateur</text></svg>
<div style="left:632px;top:542px;width:311px;height:12px;background:linear-gradient(90deg,#0000ff 0,#0000ff 2.5%,#00ffff 25%,#00ff00 50%,#ffff00 75%,#ff0000 97.5%,#ff0000 100%);box-shadow:1px 1px 0 #6a6a6a,0 -1px 0 #b0a0a0;"></div>
<div style="left:632px;top:574px;width:311px;height:12px;background:linear-gradient(90deg,#0000ff 0,#0000ff 2.5%,#00ffff 25%,#00ff00 50%,#ffff00 75%,#ff0000 97.5%,#ff0000 100%);box-shadow:1px 1px 0 #6a6a6a,0 -1px 0 #b0a0a0;"></div>
<div style="left:632px;top:608px;width:311px;height:12px;background:linear-gradient(90deg,#0000ff 0,#0000ff 2.5%,#00ffff 25%,#00ff00 50%,#ffff00 75%,#ff0000 97.5%,#ff0000 100%);box-shadow:1px 1px 0 #6a6a6a,0 -1px 0 #b0a0a0;"></div>
<svg class="t" style="left:640.70px;top:552.00px" width="1" height="1" overflow="visible"><text x="0" y="0" font-family="'Liberation Sans', sans-serif" font-size="9.6" font-weight="700" fill="#fff" textLength="91.80" lengthAdjust="spacingAndGlyphs" >Température Plateau</text></svg>
<svg class="t" style="left:767.60px;top:552.00px" width="1" height="1" overflow="visible"><text x="0" y="0" font-family="'Liberation Sans', sans-serif" font-size="9.6" font-weight="700" fill="#000" textLength="37.20" lengthAdjust="spacingAndGlyphs" >100,00°C</text></svg>
<svg class="t" style="left:640.70px;top:584.00px" width="1" height="1" overflow="visible"><text x="0" y="0" font-family="'Liberation Sans', sans-serif" font-size="9.6" font-weight="700" fill="#fff" textLength="51.90" lengthAdjust="spacingAndGlyphs" >Extrudeur 1</text></svg>
<svg class="t" style="left:897.50px;top:584.00px" width="1" height="1" overflow="visible"><text x="0" y="0" font-family="'Liberation Sans', sans-serif" font-size="9.6" font-weight="700" fill="#fff" textLength="37.90" lengthAdjust="spacingAndGlyphs" >100,00°C</text></svg>
<svg class="t" style="left:640.70px;top:618.00px" width="1" height="1" overflow="visible"><text x="0" y="0" font-family="'Liberation Sans', sans-serif" font-size="9.6" font-weight="700" fill="#fff" textLength="51.90" lengthAdjust="spacingAndGlyphs" >Extrudeur 2</text></svg>
<svg class="t" style="left:897.50px;top:618.00px" width="1" height="1" overflow="visible"><text x="0" y="0" font-family="'Liberation Sans', sans-serif" font-size="9.6" font-weight="700" fill="#fff" textLength="37.90" lengthAdjust="spacingAndGlyphs" >100,00°C</text></svg>
<div style="left:951px;top:474.2px;width:46px;height:19.6px;background:#f0f0f0;box-sizing:border-box;border:1px solid #a9aeb8;"></div><div style="left:980px;top:476.2px;width:14.4px;height:15.6px;background:#ececec;box-sizing:border-box;border:1px solid #e0e0e0;"></div><div style="left:980px;top:483.6px;width:14.4px;height:1px;background:#e0e0e0;"></div><svg style="left:984.6px;top:477.6px" width="6" height="14" viewBox="0 0 6 14"><path d="M0 3.4 L2.7 0.4 L5.4 3.4Z M0 9.6 L2.7 12.6 L5.4 9.6Z" fill="#444"/></svg>
<svg class="t" style="left:954.00px;top:487.00px" width="1" height="1" overflow="visible"><text x="0" y="0" font-family="'Liberation Sans', sans-serif" font-size="12" font-weight="400" fill="#8a8a8a" textLength="17.60" lengthAdjust="spacingAndGlyphs" >100</text></svg>
<div style="left:951px;top:506.2px;width:46px;height:19.6px;background:#f0f0f0;box-sizing:border-box;border:1px solid #a9aeb8;"></div><div style="left:980px;top:508.2px;width:14.4px;height:15.6px;background:#ececec;box-sizing:border-box;border:1px solid #e0e0e0;"></div><div style="left:980px;top:515.6px;width:14.4px;height:1px;background:#e0e0e0;"></div><svg style="left:984.6px;top:509.6px" width="6" height="14" viewBox="0 0 6 14"><path d="M0 3.4 L2.7 0.4 L5.4 3.4Z M0 9.6 L2.7 12.6 L5.4 9.6Z" fill="#444"/></svg>
<svg class="t" style="left:954.00px;top:519.00px" width="1" height="1" overflow="visible"><text x="0" y="0" font-family="'Liberation Sans', sans-serif" font-size="12" font-weight="400" fill="#8a8a8a" textLength="17.60" lengthAdjust="spacingAndGlyphs" >100</text></svg>
<div style="left:951px;top:538px;width:48px;height:19.6px;background:#f0f0f0;box-sizing:border-box;border:1px solid #a9aeb8;"></div><div style="left:982px;top:540px;width:14.4px;height:15.6px;background:#ececec;box-sizing:border-box;border:1px solid #e0e0e0;"></div><div style="left:982px;top:547.4px;width:14.4px;height:1px;background:#e0e0e0;"></div><svg style="left:986.6px;top:541.4px" width="6" height="14" viewBox="0 0 6 14"><path d="M0 3.4 L2.7 0.4 L5.4 3.4Z M0 9.6 L2.7 12.6 L5.4 9.6Z" fill="#444"/></svg>
<svg class="t" style="left:953.00px;top:551.00px" width="1" height="1" overflow="visible"><text x="0" y="0" font-family="'Liberation Sans', sans-serif" font-size="12" font-weight="400" fill="#8a8a8a" textLength="12.20" lengthAdjust="spacingAndGlyphs" >60</text></svg>
<div style="left:951px;top:570.2px;width:48px;height:19.6px;background:#f0f0f0;box-sizing:border-box;border:1px solid #a9aeb8;"></div><div style="left:982px;top:572.2px;width:14.4px;height:15.6px;background:#ececec;box-sizing:border-box;border:1px solid #e0e0e0;"></div><div style="left:982px;top:579.6px;width:14.4px;height:1px;background:#e0e0e0;"></div><svg style="left:986.6px;top:573.6px" width="6" height="14" viewBox="0 0 6 14"><path d="M0 3.4 L2.7 0.4 L5.4 3.4Z M0 9.6 L2.7 12.6 L5.4 9.6Z" fill="#444"/></svg>
<svg class="t" style="left:953.00px;top:583.00px" width="1" height="1" overflow="visible"><text x="0" y="0" font-family="'Liberation Sans', sans-serif" font-size="12" font-weight="400" fill="#8a8a8a" textLength="17.70" lengthAdjust="spacingAndGlyphs" >210</text></svg>
<div style="left:951px;top:604px;width:48px;height:19.6px;background:#f0f0f0;box-sizing:border-box;border:1px solid #a9aeb8;"></div><div style="left:982px;top:606px;width:14.4px;height:15.6px;background:#ececec;box-sizing:border-box;border:1px solid #e0e0e0;"></div><div style="left:982px;top:613.4px;width:14.4px;height:1px;background:#e0e0e0;"></div><svg style="left:986.6px;top:607.4px" width="6" height="14" viewBox="0 0 6 14"><path d="M0 3.4 L2.7 0.4 L5.4 3.4Z M0 9.6 L2.7 12.6 L5.4 9.6Z" fill="#444"/></svg>
<svg class="t" style="left:953.00px;top:617.00px" width="1" height="1" overflow="visible"><text x="0" y="0" font-family="'Liberation Sans', sans-serif" font-size="12" font-weight="400" fill="#8a8a8a" textLength="17.70" lengthAdjust="spacingAndGlyphs" >210</text></svg>
<svg style="left:770px;top:70px" width="130" height="210" viewBox="770 70 130 210"><polygon points="789.8,269.2 882.8,106.1 888.1,109.1 889.7,80.2 865.9,96.7 871.2,99.7 780.9,264.3" fill="#ff0000"/></svg>
</div></body></html>
